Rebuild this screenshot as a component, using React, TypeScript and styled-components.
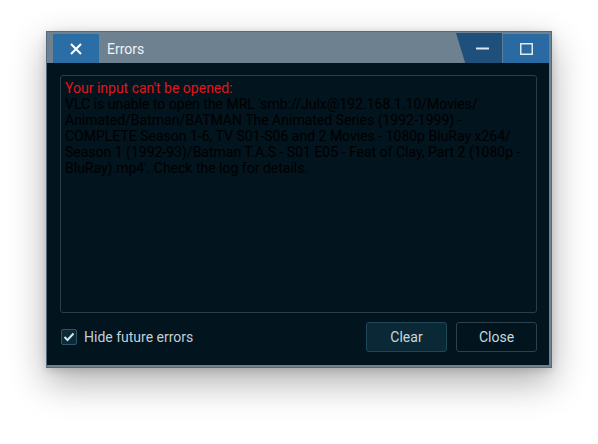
import React from "react";
import styled, { createGlobalStyle } from "styled-components";

const Global = createGlobalStyle`
  html, body { margin: 0; padding: 0; background: #ffffff; }
  body { font-family: Roboto, "Liberation Sans", sans-serif; }
`;

const Page = styled.div`
  padding: 31px 0 0 46px;
  height: 444px;
  box-sizing: border-box;
`;

const Window = styled.div`
  width: 506px;
  box-sizing: border-box;
  background: #6d8191;
  border: 1px solid #56697a;
  padding: 0 2px 2px 0;
  box-shadow: 0 14px 34px rgba(0, 0, 0, 0.32), 0 2px 8px rgba(0, 0, 0, 0.14);
`;

const TitleBar = styled.div`
  height: 31px;
  box-sizing: border-box;
  padding: 2px 0 0 6px;
  display: flex;
  align-items: stretch;
`;

const CloseTitleButton = styled.div`
  width: 46px;
  background: #2b6ea6;
  display: flex;
  align-items: center;
  justify-content: center;
`;

const Title = styled.div`
  margin-left: 8px;
  flex: 1;
  display: flex;
  align-items: center;
  color: #eef3f6;
  font-size: 14px;
  padding-top: 1px;
`;

const MinButton = styled.div`
  width: 46px;
  margin-top: -1px;
  background: #1f4f7b;
  clip-path: polygon(0 0, 100% 0, 100% 100%, 20% 100%);
  display: flex;
  align-items: center;
  justify-content: center;
  padding-left: 6px;
  box-sizing: border-box;
`;

const Divider = styled.div`
  width: 1px;
  background: #5c7c98;
`;

const MaxButton = styled.div`
  width: 46px;
  background: #2a6aa2;
  display: flex;
  align-items: center;
  justify-content: center;
`;

const Body = styled.div`
  background: #02141e;
  height: 302px;
  box-sizing: border-box;
  padding: 12px 12px 13px 13px;
  display: flex;
  flex-direction: column;
`;

const MessageBox = styled.div`
  height: 238px;
  box-sizing: border-box;
  border: 1px solid #2a3d49;
  border-radius: 3px;
  padding: 4px 4px;
  font-size: 14px;
  line-height: 16px;
  color: #000000;
`;

const Line = styled.div<{ $error?: boolean }>`
  white-space: nowrap;
  color: ${(p) => (p.$error ? "#e3141c" : "#000000")};
`;

const Footer = styled.div`
  margin-top: 9px;
  display: flex;
  align-items: center;
  height: 30px;
`;

const CheckRow = styled.label`
  display: flex;
  align-items: center;
  flex: 1;
  color: #c3cfd7;
  font-size: 14px;
  padding-left: 1px;
`;

const CheckBox = styled.span`
  width: 16px;
  height: 16px;
  box-sizing: border-box;
  border: 1px solid #2d5569;
  background: #0c2937;
  border-radius: 2px;
  display: flex;
  align-items: center;
  justify-content: center;
  margin-right: 7px;
`;

const Button = styled.div<{ $primary?: boolean }>`
  width: 81px;
  height: 30px;
  box-sizing: border-box;
  border-radius: 3px;
  border: 1px solid ${(p) => (p.$primary ? "#1d4858" : "#2d404c")};
  background: ${(p) => (p.$primary ? "#0a2836" : "#02141e")};
  color: #c8d6de;
  font-size: 14px;
  display: flex;
  align-items: center;
  justify-content: center;
  & + & { margin-left: 9px; }
`;

export default function App() {
  return (
    <>
      <Global />
      <Page>
        <Window>
          <TitleBar>
            <CloseTitleButton>
              <svg width="12" height="12" viewBox="0 0 12 12">
                <path d="M1 1L11 11M11 1L1 11" stroke="#ffffff" strokeWidth="2" />
              </svg>
            </CloseTitleButton>
            <Title>Errors</Title>
            <MinButton>
              <svg width="13" height="3" viewBox="0 0 13 3">
                <rect x="0" y="0.5" width="13" height="2" fill="#dfe9f0" />
              </svg>
            </MinButton>
            <Divider />
            <MaxButton>
              <svg width="13" height="12" viewBox="0 0 13 12">
                <rect x="0.75" y="0.75" width="11.5" height="10.5" fill="none" stroke="#dfe9f0" strokeWidth="1.5" />
              </svg>
            </MaxButton>
          </TitleBar>
          <Body>
            <MessageBox>
              <Line $error>Your input can't be opened:</Line>
              <Line>VLC is unable to open the MRL 'smb://Julx@192.168.1.10/Movies/</Line>
              <Line>Animated/Batman/BATMAN The Animated Series (1992-1999) -</Line>
              <Line>COMPLETE Season 1-6, TV S01-S06 and 2 Movies - 1080p BluRay x264/</Line>
              <Line>Season 1 (1992-93)/Batman T.A.S - S01 E05 - Feat of Clay, Part 2 (1080p -</Line>
              <Line>BluRay).mp4'. Check the log for details.</Line>
            </MessageBox>
            <Footer>
              <CheckRow>
                <CheckBox>
                  <svg width="12" height="10" viewBox="0 0 12 10">
                    <path d="M1.5 5L4.5 8L10.5 1.5" fill="none" stroke="#d3e6f0" strokeWidth="2" />
                  </svg>
                </CheckBox>
                Hide future errors
              </CheckRow>
              <Button $primary>Clear</Button>
              <Button>Close</Button>
            </Footer>
          </Body>
        </Window>
      </Page>
    </>
  );
}
